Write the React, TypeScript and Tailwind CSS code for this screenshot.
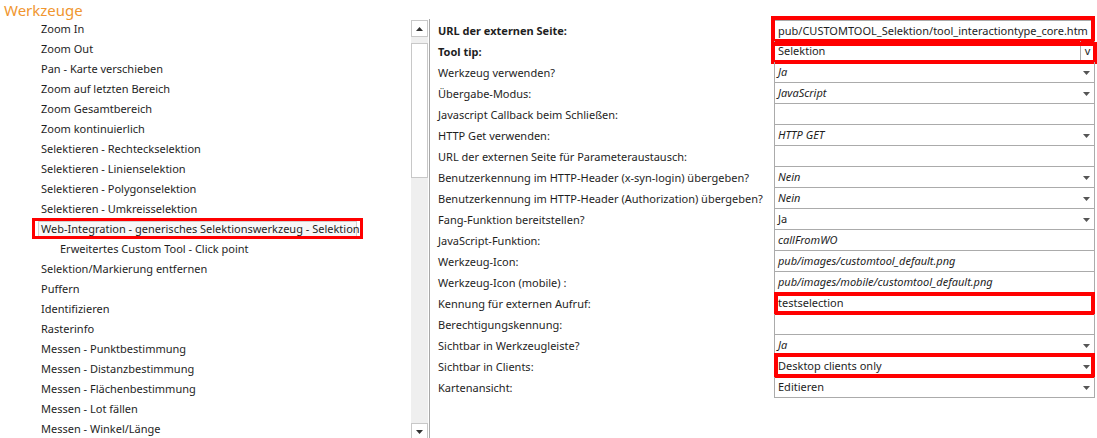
import React from 'react';

const tools: { label: string; sub?: boolean; selected?: boolean }[] = [
  { label: 'Zoom In' },
  { label: 'Zoom Out' },
  { label: 'Pan - Karte verschieben' },
  { label: 'Zoom auf letzten Bereich' },
  { label: 'Zoom Gesamtbereich' },
  { label: 'Zoom kontinuierlich' },
  { label: 'Selektieren - Rechteckselektion' },
  { label: 'Selektieren - Linienselektion' },
  { label: 'Selektieren - Polygonselektion' },
  { label: 'Selektieren - Umkreisselektion' },
  { label: 'Web-Integration - generisches Selektionswerkzeug - Selektion', selected: true },
  { label: 'Erweitertes Custom Tool - Click point', sub: true },
  { label: 'Selektion/Markierung entfernen' },
  { label: 'Puffern' },
  { label: 'Identifizieren' },
  { label: 'Rasterinfo' },
  { label: 'Messen - Punktbestimmung' },
  { label: 'Messen - Distanzbestimmung' },
  { label: 'Messen - Flächenbestimmung' },
  { label: 'Messen - Lot fällen' },
  { label: 'Messen - Winkel/Länge' },
];

type Prop = {
  label: string;
  bold?: boolean;
  value?: string;
  italic?: boolean;
  select?: boolean;
  tooltip?: boolean;
  box?: string;
};

const props: Prop[] = [
  { label: 'URL der externen Seite:', bold: true, value: 'pub/CUSTOMTOOL_Selektion/tool_interactiontype_core.htm', box: '-top-[5px] -bottom-[3px] -left-[4px] -right-[1px]' },
  { label: 'Tool tip:', bold: true, value: 'Selektion', tooltip: true, box: 'top-[1px] -bottom-[3px] -left-[4px] -right-[3px]' },
  { label: 'Werkzeug verwenden?', value: 'Ja', italic: true, select: true },
  { label: 'Übergabe-Modus:', value: 'JavaScript', italic: true, select: true },
  { label: 'Javascript Callback beim Schließen:' },
  { label: 'HTTP Get verwenden:', value: 'HTTP GET', italic: true, select: true },
  { label: 'URL der externen Seite für Parameteraustausch:' },
  { label: 'Benutzerkennung im HTTP-Header (x-syn-login) übergeben?', value: 'Nein', italic: true, select: true },
  { label: 'Benutzerkennung im HTTP-Header (Authorization) übergeben?', value: 'Nein', italic: true, select: true },
  { label: 'Fang-Funktion bereitstellen?', value: 'Ja', select: true },
  { label: 'JavaScript-Funktion:', value: 'callFromWO', italic: true },
  { label: 'Werkzeug-Icon:', value: 'pub/images/customtool_default.png', italic: true },
  { label: 'Werkzeug-Icon (mobile) :', value: 'pub/images/mobile/customtool_default.png', italic: true },
  { label: 'Kennung für externen Aufruf:', value: 'testselection', box: '-top-[1px] -bottom-[2px] -left-[1px] -right-[1px]' },
  { label: 'Berechtigungskennung:' },
  { label: 'Sichtbar in Werkzeugleiste?', value: 'Ja', italic: true, select: true },
  { label: 'Sichtbar in Clients:', value: 'Desktop clients only', select: true, box: '-top-[3px] -bottom-[2px] -left-[1px] -right-[1px]' },
  { label: 'Kartenansicht:', value: 'Editieren', select: true },
];

function Caret() {
  return (
    <svg width="7" height="4" viewBox="0 0 7 4" className="absolute right-[4px] top-[9px]">
      <path d="M0 0 L7 0 L3.5 4 Z" fill="#555" />
    </svg>
  );
}

export default function App() {
  return (
    <div className="w-[1097px] h-[438px] overflow-hidden bg-white text-[11px] text-[#1e1e1e]" style={{ fontFamily: '"Noto Sans", "Open Sans", sans-serif' }}>
      <div className="h-[19px] pl-[4px] pt-[1px] text-[15px] leading-[18px] text-[#f0962f]">Werkzeuge</div>
      <div className="flex">
        {/* tool list */}
        <div className="w-[411px] shrink-0">
          {tools.map((t) => (
            <div key={t.label} className="relative h-[20px] leading-[20px]">
              {t.selected && (
                <>
                  <div className="absolute left-[38px] right-[54px] top-[2px] bottom-[2px] border border-[#d0d0d0] bg-[#f7f7f7]" />
                  <div className="absolute left-[32px] right-[48px] -top-[1px] bottom-0 border-[3px] border-[#ff0000]" />
                </>
              )}
              <span className={`relative whitespace-nowrap ${t.sub ? 'pl-[60px]' : 'pl-[41px]'}`}>{t.label}</span>
            </div>
          ))}
        </div>

        {/* scrollbar */}
        <div className="w-[17px] shrink-0 h-[420px] mt-[1px] bg-[#efefef] flex flex-col">
          <div className="h-[17px] border border-[#c8c8c8] bg-white flex items-center justify-center">
            <svg width="7" height="4" viewBox="0 0 7 4"><path d="M0 4 L7 4 L3.5 0 Z" fill="#333" /></svg>
          </div>
          <div className="mt-[6px] h-[135px] border border-[#c8c8c8] bg-white" />
          <div className="flex-1" />
          <div className="h-[17px] border border-[#c8c8c8] bg-white flex items-center justify-center">
            <svg width="7" height="4" viewBox="0 0 7 4"><path d="M0 0 L7 0 L3.5 4 Z" fill="#333" /></svg>
          </div>
        </div>

        <div className="w-[1px] ml-[1px] h-[420px] bg-[#a8a8a8]" />

        {/* property grid */}
        <div className="pt-[1px]">
          {props.map((p) => (
            <div key={p.label} className="flex h-[21px] leading-[20px]">
              <div className={`w-[344px] pl-[8px] pt-[1px] whitespace-nowrap ${p.bold ? 'font-bold' : ''}`}>{p.label}</div>
              <div className={`relative w-[321px] border-x border-b border-[#ababab] ${p.label.startsWith('URL der externen Seite:') ? 'border-t' : ''}`}>
                {p.value && (
                  <span className={`absolute left-[3px] top-0 whitespace-nowrap ${p.italic ? 'italic' : ''}`}>{p.value}</span>
                )}
                {p.select && <Caret />}
                {p.tooltip && (
                  <div className="absolute right-0 top-0 bottom-0 w-[14px] border-l border-[#ababab] text-center leading-[20px]">v</div>
                )}
                {p.box && <div className={`absolute border-[4px] border-[#ff0000] ${p.box}`} />}
              </div>
            </div>
          ))}
        </div>
      </div>
    </div>
  );
}
